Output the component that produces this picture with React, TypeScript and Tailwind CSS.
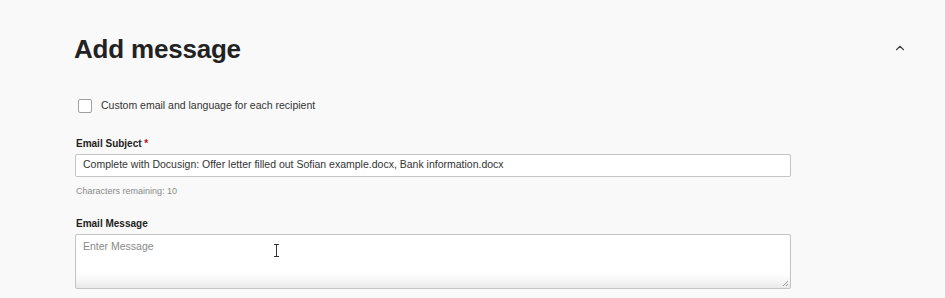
import { ChevronUp } from "lucide-react";

export default function App() {
  return (
    <div
      className="h-[298px] w-[945px] overflow-hidden bg-[#f9f9f9] text-[#222]"
      style={{ fontFamily: "'Liberation Sans', Arial, sans-serif" }}
    >
      <div className="flex items-start justify-between pl-[74px] pr-[38px] pt-[33px]">
        <h2 className="text-[26px] font-bold leading-[32px] tracking-[-0.2px] text-[#222]">
          Add message
        </h2>
        <ChevronUp className="mt-[8px] h-[14px] w-[14px] text-[#444]" strokeWidth={2} />
      </div>

      <div className="pl-[75px] pr-[154px]">
        <label className="mt-[33px] flex items-center gap-[9px] pl-[3px]">
          <span className="h-[14px] w-[14px] rounded-[2px] border border-[#a0a0a0] bg-white" />
          <span className="text-[10.5px] text-[#333]">Custom email and language for each recipient</span>
        </label>

        <div className="mt-[22px] pl-[1px] text-[10px] font-bold text-[#222]">
          Email Subject <span className="text-[#d0021b]">*</span>
        </div>
        <div className="mt-[3px] flex h-[23px] items-center rounded-[2px] border border-[#c4c4c4] bg-white px-[7px] text-[10.5px] text-[#333]">
          Complete with Docusign: Offer letter filled out Sofian example.docx, Bank information.docx
        </div>
        <div className="mt-[8px] pl-[1px] text-[9px] text-[#8a8a8a]">Characters remaining: 10</div>

        <div className="mt-[18px] pl-[1px] text-[10px] font-bold text-[#222]">Email Message</div>
        <div className="relative mt-[3px] h-[55px] rounded-[2px] border border-[#c4c4c4] bg-white px-[7px] pt-[4px] text-[10.5px] text-[#8a8a8a] shadow-[inset_0_-14px_14px_-10px_rgba(0,0,0,0.12)]">
          Enter Message
          <svg className="absolute left-[197px] top-[9px]" width="7" height="13" viewBox="0 0 7 13">
            <path d="M1 0.5 H6 M3.5 0.5 V12.5 M1 12.5 H6" stroke="#333" strokeWidth="1" fill="none" />
          </svg>
          <svg className="absolute bottom-[1px] right-[1px]" width="7" height="7" viewBox="0 0 7 7">
            <path d="M6 1 L1 6 M6 4 L4 6" stroke="#999" strokeWidth="1" />
          </svg>
        </div>
      </div>
    </div>
  );
}
